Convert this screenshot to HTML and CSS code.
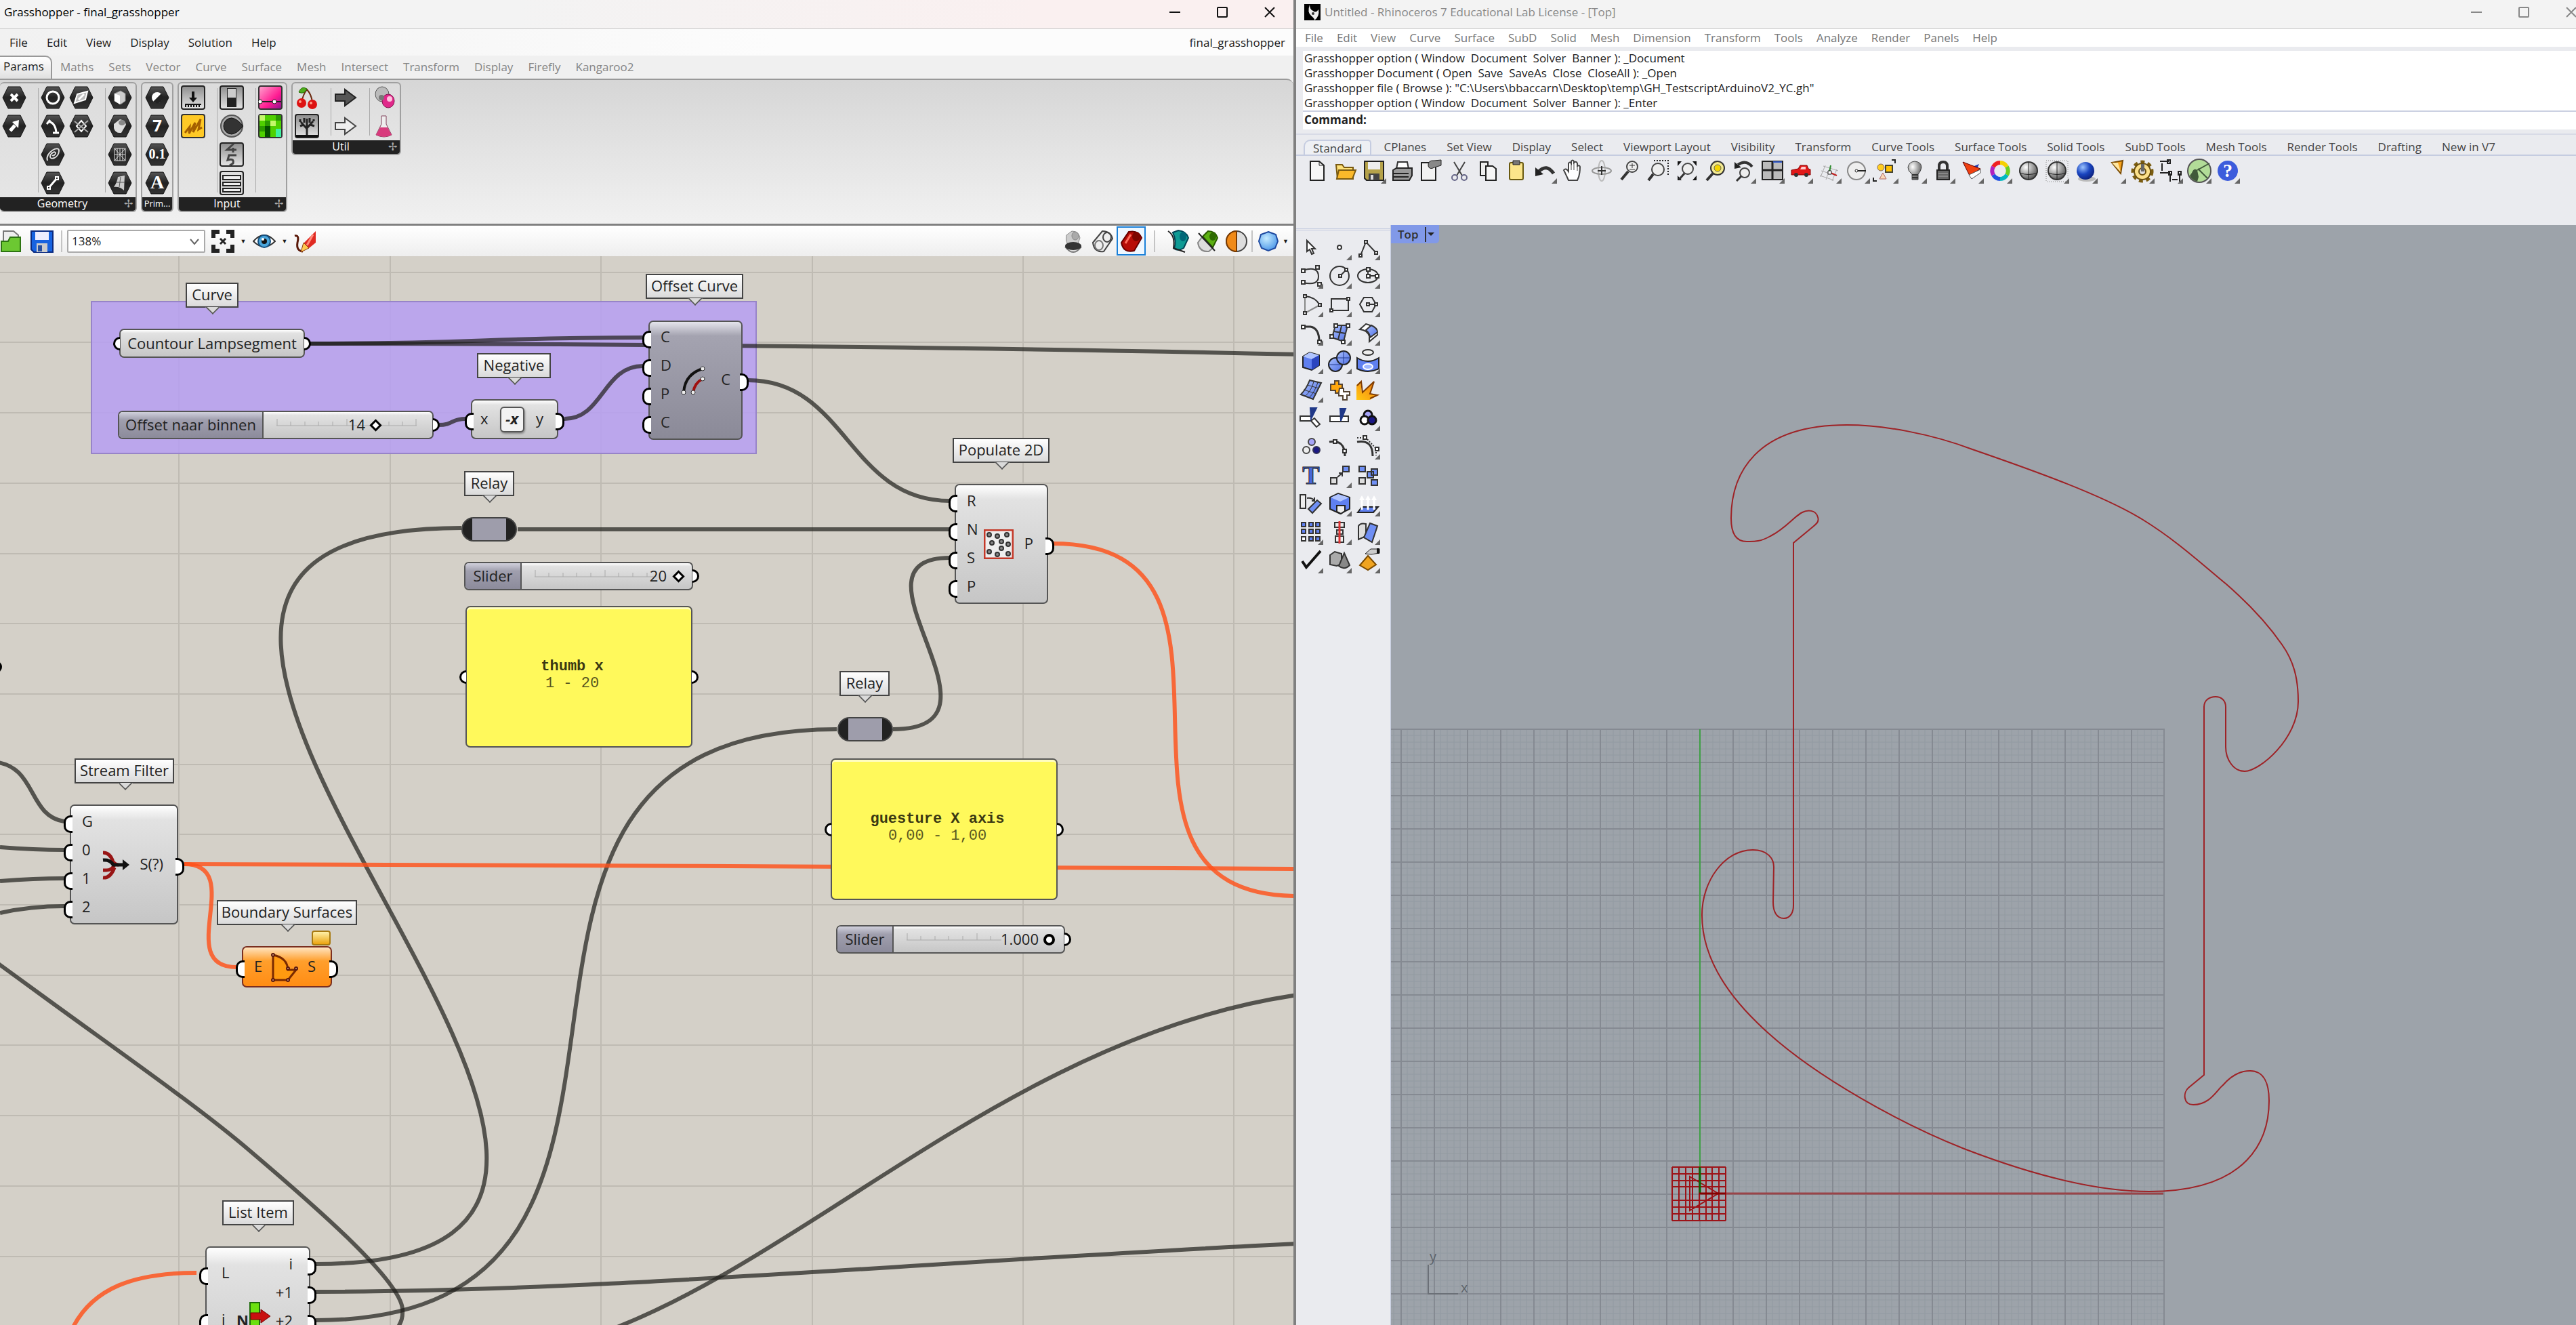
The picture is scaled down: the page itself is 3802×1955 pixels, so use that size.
FILE: index.html
```html
<!DOCTYPE html>
<html lang="en">
<head>
<meta charset="utf-8">
<title>Grasshopper - final_grasshopper</title>
<link rel="stylesheet" href="styles.css">
</head>
<body>
<svg class="defs" aria-hidden="true">
  <defs>
    <linearGradient id="g-dark" x1="0" y1="0" x2="0" y2="1"><stop offset="0" stop-color="#555"/><stop offset=".5" stop-color="#222"/><stop offset="1" stop-color="#333"/></linearGradient>
    <linearGradient id="g-grey" x1="0" y1="0" x2="0" y2="1"><stop offset="0" stop-color="#8d8d8d"/><stop offset="1" stop-color="#e6e6e6"/></linearGradient>
    <linearGradient id="g-pink" x1="0" y1="0" x2="1" y2="1"><stop offset="0" stop-color="#ffa6cf"/><stop offset=".6" stop-color="#ff1c92"/><stop offset="1" stop-color="#8a1090"/></linearGradient>
    <linearGradient id="g-blue" x1="0" y1="0" x2="1" y2="1"><stop offset="0" stop-color="#a9c0ff"/><stop offset="1" stop-color="#4f6fe4"/></linearGradient>
    <linearGradient id="g-orange" x1="0" y1="1" x2="1" y2="0"><stop offset="0" stop-color="#ffc814"/><stop offset="1" stop-color="#f47a10"/></linearGradient>
    <radialGradient id="g-ball" cx=".35" cy=".3" r=".8"><stop offset="0" stop-color="#fff"/><stop offset="1" stop-color="#444"/></radialGradient>
    <radialGradient id="g-bball" cx=".35" cy=".3" r=".8"><stop offset="0" stop-color="#9cc4ff"/><stop offset=".5" stop-color="#1a45c0"/><stop offset="1" stop-color="#0a1a70"/></radialGradient>
    <radialGradient id="g-gem" cx=".4" cy=".35" r=".7"><stop offset="0" stop-color="#c5ebff"/><stop offset="1" stop-color="#4794e8"/></radialGradient>
    <symbol id="hex" viewBox="0 0 36 34"><path d="M9 1H27L35 17 27 33H9L1 17Z" fill="url(#g-dark)" stroke="#111"/></symbol>
    <symbol id="tri" viewBox="0 0 42 42"><path d="M39 32V40H31Z" fill="#666"/></symbol>
    <pattern id="cplane" x="2508" y="1761" width="49" height="49" patternUnits="userSpaceOnUse">
      <path d="M10 0V49M20 0V49M30 0V49M39 0V49M0 10H49M0 20H49M0 30H49M0 39H49" stroke="#929aa1"/>
      <path d="M1 0V49M0 1H49" stroke="#858a92" stroke-width="2"/>
    </pattern>
  </defs>
</svg>

<section class="window gh">
  <header class="titlebar">
    <h1>Grasshopper - final_grasshopper</h1>
    <div class="controls">
      <button aria-label="Minimize"><svg width="20" height="20"><path d="M2 10H18"/></svg></button>
      <button aria-label="Maximize"><svg width="20" height="20"><rect x="3" y="3" width="14" height="14" rx="1"/></svg></button>
      <button aria-label="Close"><svg width="20" height="20"><path d="M3 3L17 17M17 3L3 17"/></svg></button>
    </div>
  </header>
  <nav class="menu">
    <button>File</button><button>Edit</button><button>View</button><button>Display</button><button>Solution</button><button>Help</button>
    <span class="docname">final_grasshopper</span>
  </nav>
  <nav class="tabs">
    <button class="active">Params</button><button>Maths</button><button>Sets</button><button>Vector</button><button>Curve</button><button>Surface</button><button>Mesh</button><button>Intersect</button><button>Transform</button><button>Display</button><button>Firefly</button><button>Kangaroo2</button>
  </nav>
  <div class="ribbon">
    <section class="rgroup geometry">
      <div class="cells">
        <div class="col">
          <button aria-label="Point"><svg><use href="#hex"/><path d="M13 12L23 22M23 12L13 22" stroke="#fff" stroke-width="4"/></svg></button>
          <button aria-label="Vector"><svg><use href="#hex"/><path d="M12 24L19 16" stroke="#fff" stroke-width="5"/><path d="M15 11L25 8 24 20Z" fill="#fff"/></svg></button>
        </div>
        <div class="col">
          <button aria-label="Circle"><svg><use href="#hex"/><circle cx="18" cy="17" r="9" fill="none" stroke="#fff" stroke-width="3"/></svg></button>
          <button aria-label="Arc"><svg><use href="#hex"/><path d="M11 10Q22 12 23 27M9 14L14 8M18 27H27" fill="none" stroke="#fff" stroke-width="3"/></svg></button>
          <button aria-label="Curve"><svg><use href="#hex"/><path d="M10 26C6 14 28 2 27 12 26 22 14 26 14 20 14 15 22 11 22 15 22 18 18 19 17 18" fill="none" stroke="#ddd" stroke-width="2"/></svg></button>
          <button aria-label="Line"><svg><use href="#hex"/><path d="M12 24L24 10" stroke="#fff" stroke-width="3"/><path d="M10 22h4v4h-4ZM22 8h4v4h-4Z" fill="#222" stroke="#fff" stroke-width="2"/></svg></button>
        </div>
        <div class="col next">
          <button aria-label="Plane"><svg><use href="#hex"/><path d="M12 12L27 8 24 20 8 25Z" fill="#bbb" stroke="#fff" stroke-width="2"/><path d="M14 20L22 12" stroke="#fff" stroke-width="3"/></svg></button>
          <button aria-label="Rectangle"><svg><use href="#hex"/><path d="M11 17L18 9 25 17 18 25Z" fill="none" stroke="#fff" stroke-width="2"/><path d="M8 10L28 26M28 9L8 26" stroke="#aaa" stroke-width="2"/></svg></button>
        </div>
        <div class="col">
          <button aria-label="Box"><svg><use href="#hex"/><path d="M10 11L19 7 26 11V22L19 27 10 22Z" fill="#ccc" stroke="#888"/><path d="M10 11L18 14V27L10 22Z" fill="#fff"/></svg></button>
          <button aria-label="Brep"><svg><use href="#hex"/><path d="M9 14L18 7Q26 8 27 15L20 27Q11 28 9 20Z" fill="#ddd"/><ellipse cx="21" cy="12" rx="5" ry="4" fill="#888"/></svg></button>
          <button aria-label="Mesh"><svg><use href="#hex"/><path d="M10 8H26V26H10ZM18 8V26M10 17H26M10 8L26 26M26 8L10 26M14 8V26M22 8V26" fill="none" stroke="#ddd"/></svg></button>
          <button aria-label="Surface"><svg><use href="#hex"/><path d="M15 8L25 6 24 28Q18 22 9 23 14 16 15 8Z" fill="#ccc"/><path d="M19 8L17 23M12 16H25" stroke="#555"/></svg></button>
        </div>
      </div>
      <footer>Geometry<i>✢</i></footer>
    </section>
    <section class="rgroup primitive">
      <div class="cells">
        <div class="col">
          <button aria-label="Boolean"><svg><use href="#hex"/><circle cx="18" cy="17" r="8" fill="#fff"/><path d="M24 11A8 8 0 0 1 12 23Z" fill="#222"/></svg></button>
          <button aria-label="Integer"><svg><use href="#hex"/></svg><b>7</b></button>
          <button aria-label="Number"><svg><use href="#hex"/></svg><b class="serif small">0.1</b></button>
          <button aria-label="Text"><svg><use href="#hex"/></svg><b class="serif">A</b></button>
        </div>
      </div>
      <footer>Prim...</footer>
    </section>
    <section class="rgroup input">
      <div class="cells">
        <div class="col">
          <button aria-label="Number Slider"><svg><rect x="1" y="1" width="34" height="34" rx="3" fill="url(#g-grey)" stroke="#222" stroke-width="2"/><path d="M18 9V20" stroke="#111" stroke-width="4"/><path d="M12 18H24L18 25Z" fill="#111"/><path d="M6 28H30M7 28V32M11 28V32M15 28V32M19 28V32M23 28V32M27 28V32" stroke="#111" stroke-width="2"/></svg></button>
          <button aria-label="Graph Mapper"><svg><rect x="1" y="1" width="34" height="34" rx="3" fill="#ffc926" stroke="#333" stroke-width="2"/><path d="M6 28L13 19 12 29 21 13 18 27 29 8 26 23 31 20" fill="none" stroke="#a55f00" stroke-width="3"/></svg></button>
        </div>
        <div class="col">
          <button aria-label="Boolean Toggle"><svg><rect x="1" y="1" width="34" height="34" rx="3" fill="url(#g-grey)" stroke="#222" stroke-width="2"/><rect x="11" y="4" width="14" height="28" fill="#222"/><rect x="12" y="5" width="12" height="13" fill="#ccc"/></svg></button>
          <button aria-label="Control Knob"><svg><circle cx="18" cy="18" r="16" fill="#aaa" stroke="#555" stroke-width="2"/><path d="M18 6A12 12 0 1 0 18 30Q26 29 35 18 26 7 18 6Z" fill="#333" stroke="#111"/></svg></button>
          <button aria-label="Digit Scroller"><svg><rect x="1" y="1" width="34" height="34" rx="3" fill="url(#g-grey)" stroke="#222" stroke-width="2"/><path d="M21 2L11 11H25M20 8V15M25 19H14L12 26Q22 23 20 31L15 34" fill="none" stroke="#444" stroke-width="3"/></svg></button>
          <button aria-label="Value List"><svg><rect x="1" y="1" width="34" height="34" rx="3" fill="#ddd" stroke="#222" stroke-width="2"/><path d="M5 7H31V13H5ZM5 17H31V22H5ZM5 26H31V31H5Z" fill="#eee" stroke="#222" stroke-width="2"/></svg></button>
        </div>
        <div class="col">
          <button aria-label="Gradient"><svg><rect x="1" y="1" width="34" height="34" rx="3" fill="url(#g-pink)" stroke="#333" stroke-width="2"/><path d="M2 24H34" stroke="#222" stroke-width="2"/><circle cx="3" cy="24" r="3" fill="#fff" stroke="#222"/><circle cx="24" cy="24" r="3" fill="#fff" stroke="#222"/></svg></button>
          <button aria-label="Image Sampler"><svg><rect x="1" y="1" width="34" height="34" rx="3" fill="#4fd000" stroke="#333" stroke-width="2"/><path d="M2 2H10V10H2ZM18 10H26V18H18Z" fill="#c4f86a"/><path d="M10 10H18V18H10ZM26 2H34V10H26ZM2 18H10V26H2Z" fill="#2a9a00"/><path d="M10 18H18V34H10Z" fill="#045000"/><path d="M26 22H34V34H26Z" fill="#3ff0a0"/></svg></button>
        </div>
      </div>
      <footer>Input<i>✢</i></footer>
    </section>
    <section class="rgroup util">
      <div class="cells">
        <div class="col">
          <button aria-label="Cherry Picker"><svg><path d="M10 25Q12 14 18 6 25 14 26 25" fill="none" stroke="#6b2a10" stroke-width="2"/><path d="M18 5Q10 0 6 10 14 14 18 5Z" fill="#4fae1c" stroke="#28700a"/><circle cx="10" cy="26" r="7" fill="#dd1212"/><circle cx="26" cy="28" r="7" fill="#dd1212"/><circle cx="8" cy="24" r="2" fill="#ff9d8a"/><circle cx="24" cy="26" r="2" fill="#ff9d8a"/></svg></button>
          <button aria-label="Galapagos"><svg><rect x="1" y="1" width="34" height="34" rx="3" fill="url(#g-grey)" stroke="#222" stroke-width="2"/><path d="M18 31V18M18 22L9 12M18 21L27 11M18 18V7M13 16L8 18M23 16L29 18M14 13V6M22 13V6M8 12V8M28 11V8" stroke="#222" stroke-width="3"/><path d="M2 31H34V34H2Z" fill="#111"/></svg></button>
        </div>
        <div class="col">
          <button aria-label="Relay"><svg><path d="M3 13H17V6L33 18 17 30V23H3Z" fill="#555" stroke="#222" stroke-width="2"/></svg></button>
          <button aria-label="Data Dam"><svg><path d="M3 13H17V6L33 18 17 30V23H3Z" fill="#eee" stroke="#444" stroke-width="2"/></svg></button>
        </div>
        <div class="col">
          <button aria-label="Cluster"><svg><ellipse cx="15" cy="13" rx="10" ry="11" fill="#bbb" stroke="#555"/><ellipse cx="24" cy="23" rx="9" ry="10" fill="#e0288a" stroke="#80104a"/><circle cx="14" cy="18" r="4" fill="#777"/><circle cx="26" cy="20" r="4" fill="#ffc0de"/></svg></button>
          <button aria-label="Fitness"><svg><path d="M14 3H21V15L29 31Q18 37 6 31L14 15Z" fill="#eee" stroke="#80405a"/><path d="M12 20H23L29 31Q18 37 6 31Z" fill="#d83a7c"/></svg></button>
        </div>
      </div>
      <footer>Util<i>✢</i></footer>
    </section>
  </div>
  <div class="toolbar">
    <button class="open" aria-label="Open"><svg width="32" height="36"><path d="M5 3H20L27 9V28H5Z" fill="#eee" stroke="#777" stroke-width="2"/><path d="M2 18H12L15 12H30V33H2Z" fill="#6cc832" stroke="#2d7412" stroke-width="2"/></svg></button>
    <button aria-label="Save"><svg width="34" height="36"><path d="M1 3H33V34H5L1 30Z" fill="#1763e0" stroke="#0a2a80" stroke-width="2"/><path d="M7 4H27V16H7Z" fill="#eef"/><path d="M9 21H25V34H9Z" fill="#ccc"/><path d="M11 24H17V33H11Z" fill="#2850a0"/></svg></button>
    <span class="sep"></span>
    <label class="zoom"><select aria-label="Zoom"><option>138%</option></select><svg width="14" height="10"><path d="M1 1L7 8 13 1"/></svg></label>
    <button aria-label="Zoom extents"><svg width="36" height="36"><path d="M4 13V4H13M23 4H32V13M32 23V32H23M13 32H4V23" fill="none" stroke="#222" stroke-width="6"/><path d="M14 14L22 22M22 14L14 22" stroke="#222" stroke-width="3"/></svg></button>
    <span class="drop">▼</span>
    <button aria-label="Preview"><svg width="34" height="36"><path d="M1 18Q17 0 33 18 17 34 1 18Z" fill="#fff" stroke="#333" stroke-width="2"/><circle cx="17" cy="18" r="9" fill="#4aa6dc" stroke="#145080" stroke-width="2"/><circle cx="17" cy="18" r="4" fill="#111"/><circle cx="15" cy="15" r="2" fill="#fff"/></svg></button>
    <span class="drop">▼</span>
    <button class="sketch" aria-label="Sketch"><svg width="36" height="36"><path d="M2 10Q9 8 6 20 4 32 14 33" fill="none" stroke="#5a1808" stroke-width="3"/><path d="M33 3V20L22 29 15 21Z" fill="#e02a22"/><path d="M15 20L23 28 11 34Z" fill="#ffca50" stroke="#8a3a10"/><path d="M29 8L20 24" stroke="#ff8a7a" stroke-width="3"/></svg></button>
    <div class="right">
      <button aria-label="No preview"><svg width="36" height="36"><path d="M8 9L16 3Q26 3 28 13L24 24H12Q6 20 8 9Z" fill="#ccc" stroke="#888"/><ellipse cx="21" cy="10" rx="5" ry="6" fill="#aaa" stroke="#888"/><path d="M6 26Q18 42 30 26" fill="#ddd" stroke="#777" stroke-width="2"/><ellipse cx="18" cy="25" rx="12" ry="6" fill="#333"/></svg></button>
      <button aria-label="Wireframe preview"><svg width="36" height="36"><path d="M4 20L18 3Q30 3 33 14L20 33Q6 35 4 20Z" fill="#eee" stroke="#444" stroke-width="2"/><ellipse cx="25" cy="12" rx="6" ry="7" fill="none" stroke="#444" stroke-width="2"/><ellipse cx="13" cy="24" rx="6" ry="7" fill="none" stroke="#777" stroke-width="2"/></svg></button>
      <button class="on" aria-label="Shaded preview"><svg width="36" height="36"><path d="M3 20L14 4Q28 1 33 13L22 32Q6 36 3 20Z" fill="#b80d08" stroke="#600" stroke-width="2"/><ellipse cx="25" cy="11" rx="6" ry="7" fill="#7d0500"/><path d="M9 21L17 8" stroke="#ff7060" stroke-width="3"/></svg></button>
      <span class="sep wide"></span>
      <button aria-label="Selected only"><svg width="36" height="36"><path d="M10 5L18 2Q30 3 33 13L26 28Q18 33 12 29 16 18 10 5Z" fill="#0e9a94" stroke="#045" stroke-width="2"/><ellipse cx="25" cy="11" rx="5" ry="7" fill="#067"/><path d="M3 3Q14 10 11 28L28 34" fill="none" stroke="#222" stroke-width="2"/></svg></button>
      <button aria-label="Document preview"><svg width="36" height="36"><path d="M4 20L10 12 26 28 20 33Q6 34 4 20Z" fill="#ddd" stroke="#888" stroke-width="2"/><path d="M11 11L19 3Q30 3 33 13L26 27Z" fill="#5db012" stroke="#2a5a00" stroke-width="2"/><ellipse cx="26" cy="11" rx="5" ry="6" fill="#2d6a00"/><path d="M5 6L29 32" stroke="#222" stroke-width="2"/></svg></button>
      <button aria-label="Preview quality"><svg width="36" height="36"><circle cx="18" cy="18" r="15" fill="#ddd" stroke="#444" stroke-width="2"/><path d="M18 3A15 15 0 0 0 18 33Z" fill="#f08a18" stroke="#7a3a00" stroke-width="2"/></svg></button>
      <span class="sep tight"></span>
      <button aria-label="Preview settings"><svg width="34" height="36"><path d="M17 4L28 8 31 18 27 28 17 32 7 28 3 18 6 8Z" fill="url(#g-gem)" stroke="#1f4aa0" stroke-width="2"/></svg></button>
      <span class="drop">▼</span>
    </div>
  </div>

  <main class="canvas">
    <svg class="wires" aria-hidden="true">
      <g transform="translate(0 -379)">
        <path class="grid" d="M264 379V2400M576 379V2400M887 379V2400M1199 379V2400M1510 379V2400M1821 379V2400M0 403H4000M0 506H4000M0 610H4000M0 714H4000M0 818H4000M0 921H4000M0 1025H4000M0 1129H4000M0 1232H4000M0 1336H4000M0 1440H4000M0 1543H4000M0 1647H4000M0 1751H4000M0 1855H4000"/>
        <rect x="135" y="446" width="981" height="224" fill="#b79ff0" fill-opacity=".88" stroke="#9784c8" stroke-width="2"/>
        <g class="wire">
          <path d="M458 508C700 508 720 499 949 499"/>
          <path d="M458 508C800 508 1400 512 1915 524"/>
          <path d="M647 628C670 628 665 619 687 619"/>
          <path d="M833 619C890 619 890 541 949 541"/>
          <path d="M1104 562C1250 562 1252 740 1402 740"/>
          <path d="M764 782H1402"/>
          <path d="M466 1866C1255 1866-134 780 681 780"/>
          <path d="M1318 1077C1508 1077 1234 824 1402 824"/>
          <path d="M466 1949C1109 1949 580 1077 1235 1077"/>
          <path d="M-10 1125C55 1130 40 1205 95 1213"/>
          <path d="M0 1251Q50 1255 95 1255"/>
          <path d="M0 1301Q50 1297 95 1297"/>
          <path d="M0 1348Q45 1338 95 1338"/>
          <path d="M-5 1421L76 1480C200 1570 300 1640 370 1700 470 1785 590 1890 594 1932 595 1945 592 1952 587 1960"/>
          <path d="M466 1907C900 1907 1400 1860 1915 1836"/>
          <path d="M882 1970C1192 1860 1495 1530 1915 1469"/>
        </g>
        <g class="wire hot">
          <path d="M272 1276C800 1276 1400 1282 1915 1283"/>
          <path d="M272 1276C365 1276 255 1428 349 1428"/>
          <path d="M1554 803C1903 803 1565 1323 1915 1323"/>
          <path d="M105 1965C135 1900 200 1879 290 1879"/>
        </g>
        <circle cx="-6" cy="985" r="9"/>
      </g>
    </svg>

    <span class="tag t-curve">Curve</span>
    <div class="node param n-curve"><span class="in"></span>Countour Lampsegment<span class="out"></span></div>

    <span class="tag t-offset">Offset Curve</span>
    <div class="node grey n-offset">
      <ul class="ins"><li>C</li><li>D</li><li>P</li><li>C</li></ul>
      <svg width="40" height="44"><path d="M6 40Q8 13 34 5" fill="none" stroke="#111" stroke-width="4"/><path d="M20 40Q22 26 34 20" fill="none" stroke="#a01010" stroke-width="4"/><g fill="#eee" stroke="#333"><circle cx="34" cy="5" r="3"/><circle cx="34" cy="20" r="3"/><circle cx="6" cy="40" r="3"/><circle cx="20" cy="40" r="3"/></g></svg>
      <ul class="outs"><li>C</li></ul>
    </div>

    <div class="node slider n-sl1">
      <label for="sl1">Offset naar binnen</label>
      <div class="track"><svg width="207" height="11"><path d="M0 10H207M1 0V10M21 4V10M42 4V10M62 4V10M83 4V10M104 0V10M124 4V10M145 4V10M166 4V10M186 4V10M206 0V10"/></svg><input id="sl1" type="range" min="0" max="20" value="14"><output>14</output></div>
      <span class="out"></span>
    </div>

    <span class="tag t-neg">Negative</span>
    <div class="node n-neg">
      <ul class="ins"><li>x</li></ul><b class="negx">-x</b><ul class="outs"><li>y</li></ul>
    </div>

    <span class="tag t-relay1">Relay</span>
    <div class="relay n-relay1"></div>

    <div class="node slider n-sl2">
      <label for="sl2">Slider</label>
      <div class="track"><svg width="207" height="11"><path d="M0 10H180M1 0V10M21 4V10M42 4V10M62 4V10M83 4V10M104 0V10M124 4V10M145 4V10M166 4V10"/></svg><input id="sl2" type="range" min="0" max="20" value="20"><output>20</output></div>
      <span class="out"></span>
    </div>

    <div class="node panel n-panel1"><span class="in"></span><p><b>thumb x</b><br>1 - 20</p><span class="out"></span></div>

    <span class="tag t-pop">Populate 2D</span>
    <div class="node n-pop">
      <ul class="ins"><li>R</li><li>N</li><li>S</li><li>P</li></ul>
      <svg width="44" height="44"><rect x="1" y="1" width="42" height="42" fill="#eee" stroke="#c43828" stroke-width="3"/><g fill="#888" stroke="#333" stroke-width="2"><circle cx="8" cy="8" r="3"/><circle cx="20" cy="10" r="3"/><circle cx="34" cy="8" r="3"/><circle cx="12" cy="20" r="3"/><circle cx="26" cy="18" r="3"/><circle cx="36" cy="22" r="3"/><circle cx="26" cy="28" r="3"/><circle cx="8" cy="33" r="3"/><circle cx="20" cy="37" r="3"/><circle cx="36" cy="36" r="3"/></g></svg>
      <ul class="outs"><li>P</li></ul>
    </div>

    <span class="tag t-relay2">Relay</span>
    <div class="relay n-relay2"></div>

    <div class="node panel n-panel2"><span class="in"></span><p><b>guesture X axis</b><br>0,00 - 1,00</p><span class="out"></span></div>

    <div class="node slider round n-sl3">
      <label for="sl3">Slider</label>
      <div class="track"><svg width="207" height="11"><path d="M0 10H140M1 0V10M21 4V10M42 4V10M62 4V10M83 4V10M104 0V10M124 4V10"/></svg><input id="sl3" type="range" min="0" max="1" step="0.001" value="1"><output>1.000</output></div>
      <span class="out"></span>
    </div>

    <span class="tag t-stream">Stream Filter</span>
    <div class="node n-stream">
      <ul class="ins"><li>G</li><li>0</li><li>1</li><li>2</li></ul>
      <svg width="44" height="44"><path d="M3 4Q14 4 18 18 22 22 26 22M3 30H8Q16 30 20 22M3 41Q14 42 20 26" fill="none" stroke="#981515" stroke-width="5"/><path d="M3 15Q14 14 18 22H34" fill="none" stroke="#111" stroke-width="5"/><path d="M32 14L42 22 32 30Z" fill="#111"/></svg>
      <ul class="outs"><li>S(?)</li></ul>
    </div>

    <span class="tag t-boundary">Boundary Surfaces</span>
    <div class="node orange n-boundary">
      <ul class="ins"><li>E</li></ul>
      <svg width="42" height="44"><path d="M4 4Q25 8 26 26H38L26 41H4Z" fill="#ff9a10" stroke="#7a2a00" stroke-width="3"/><g fill="#d9a080" stroke="#5a1a10" stroke-width="2"><circle cx="4" cy="4" r="2"/><circle cx="26" cy="24" r="2"/><circle cx="38" cy="24" r="2"/><circle cx="26" cy="41" r="2"/><circle cx="4" cy="41" r="2"/></g></svg>
      <ul class="outs"><li>S</li></ul>
      <span class="balloon"></span>
    </div>

    <span class="tag t-list">List Item</span>
    <div class="node n-list">
      <ul class="ins"><li>L</li><li>i</li></ul>
      <div class="listicon"><b>N</b><svg width="34" height="54"><path d="M2 2H16V54H2Z" fill="#6be010" stroke="#1d6a0a" stroke-width="2"/><path d="M3 17H18V12L32 22 18 32V27H3Z" fill="#c81010" stroke="#700"/></svg></div>
      <ul class="outs"><li>i</li><li>+1</li><li>+2</li></ul>
    </div>
  </main>
</section>

<section class="window rh">
  <header class="titlebar">
    <svg class="logo" width="24" height="24"><rect width="24" height="24" fill="#000"/><path d="M8 1Q4 12 10 17 16 22 15 24 23 18 21 8 17 14 13 10 8 8 8 1Z" fill="#eee"/><circle cx="13" cy="14" r="2" fill="#333"/></svg>
    <h1>Untitled - Rhinoceros 7 Educational Lab License - [Top]</h1>
    <div class="controls">
      <button aria-label="Minimize"><svg width="20" height="20"><path d="M2 10H18"/></svg></button>
      <button aria-label="Maximize"><svg width="20" height="20"><rect x="3" y="3" width="14" height="14" rx="1"/></svg></button>
      <button aria-label="Close"><svg width="20" height="20"><path d="M3 3L17 17M17 3L3 17"/></svg></button>
    </div>
  </header>
  <nav class="menu">
    <button>File</button><button>Edit</button><button>View</button><button>Curve</button><button>Surface</button><button>SubD</button><button>Solid</button><button>Mesh</button><button>Dimension</button><button>Transform</button><button>Tools</button><button>Analyze</button><button>Render</button><button>Panels</button><button>Help</button>
  </nav>
  <div class="command">
    <pre>Grasshopper option ( Window  Document  Solver  Banner ): _Document
Grasshopper Document ( Open  Save  SaveAs  Close  CloseAll ): _Open
Grasshopper file ( Browse ): "C:\Users\bbaccarn\Desktop\temp\GH_TestscriptArduinoV2_YC.gh"
Grasshopper option ( Window  Document  Solver  Banner ): _Enter</pre>
    <div class="prompt"><label for="cmd">Command:</label><input id="cmd" type="text"></div>
  </div>
  <nav class="tabs">
    <button class="active">Standard</button><button>CPlanes</button><button>Set View</button><button>Display</button><button>Select</button><button>Viewport Layout</button><button>Visibility</button><button>Transform</button><button>Curve Tools</button><button>Surface Tools</button><button>Solid Tools</button><button>SubD Tools</button><button>Mesh Tools</button><button>Render Tools</button><button>Drafting</button><button>New in V7</button>
  </nav>
  <div class="toolbar">
    <button aria-label="New"><svg><path d="M11 7H24L31 13V35H11Z" fill="#f6f6f6" stroke="#222" stroke-width="2"/><path d="M24 7V13H31" fill="none" stroke="#222"/></svg></button>
    <button aria-label="Open"><svg><path d="M7 12H16L19 16H32V33H9Z" fill="#ffe27a" stroke="#7a5a10" stroke-width="2"/><path d="M11 20H36L31 33H8Z" fill="#fbb92a" stroke="#7a5a10" stroke-width="2"/></svg></button>
    <button aria-label="Save"><svg><path d="M7 7H35V35H10L7 32Z" fill="#b5a24a" stroke="#222" stroke-width="2"/><path d="M12 8H30V19H12Z" fill="#eee"/><path d="M13 25H29V35H13Z" fill="#444"/><path d="M16 27H20V34H16Z" fill="#ddd"/><use href="#tri"/></svg></button>
    <button aria-label="Print"><svg><path d="M14 8H28L30 18H12Z" fill="#fff" stroke="#333" stroke-width="2"/><path d="M7 20L12 17H35V28L31 35H7Z" fill="#999" stroke="#222" stroke-width="2"/><path d="M8 25H30M8 30H30" stroke="#222" stroke-width="2"/></svg></button>
    <button aria-label="Document Properties"><svg><path d="M7 9H28V35H7Z" fill="#f2f2f2" stroke="#222" stroke-width="2"/><path d="M17 14Q16 5 26 6L36 5V13L26 16Q19 20 17 14Z" fill="#888" stroke="#222"/></svg></button>
    <button aria-label="Cut"><svg><path d="M13 8L25 28M29 8L17 28" stroke="#444" stroke-width="2"/><circle cx="14" cy="31" r="4" fill="none" stroke="#668" stroke-width="2"/><circle cx="28" cy="31" r="4" fill="none" stroke="#668" stroke-width="2"/></svg></button>
    <button aria-label="Copy"><svg><path d="M10 8H21V28H10Z" fill="#eee" stroke="#222" stroke-width="2"/><path d="M18 14H28L33 18V35H18Z" fill="#f6f6f6" stroke="#222" stroke-width="2"/></svg></button>
    <button aria-label="Paste"><svg><rect x="11" y="9" width="20" height="25" rx="2" fill="#fbe58a" stroke="#6a5a10" stroke-width="2"/><path d="M16 6H26V12H16Z" fill="#777" stroke="#222"/></svg></button>
    <button aria-label="Undo"><svg><path d="M12 22Q24 10 34 25" fill="none" stroke="#333" stroke-width="5"/><path d="M7 16V29L19 26Z" fill="#222"/><use href="#tri"/></svg></button>
    <button aria-label="Pan"><svg><path d="M14 35Q10 26 7 20 10 16 14 22V10Q16 7 18 10V7Q20 4 22 7V9Q25 6 27 10V14Q30 12 31 15 31 28 27 35Z" fill="#fff" stroke="#444" stroke-width="2"/><path d="M18 10V20M22 9V20M27 13V21" stroke="#444"/></svg></button>
    <button aria-label="Rotate View"><svg><ellipse cx="21" cy="21" rx="5" ry="15" fill="none" stroke="#bbb" stroke-width="2"/><ellipse cx="21" cy="21" rx="14" ry="5" fill="none" stroke="#999" stroke-width="2"/><path d="M21 14V27M15 21H27" stroke="#333" stroke-width="2"/></svg></button>
    <button aria-label="Zoom Dynamic"><svg><circle cx="24" cy="15" r="8" fill="#eee" stroke="#444" stroke-width="2"/><path d="M18 22L8 34" stroke="#333" stroke-width="4"/><path d="M20 13H28M24 10V17M20 19H28" stroke="#333"/></svg></button>
    <button aria-label="Zoom Window"><svg><path d="M14 6H35V27" fill="none" stroke="#222" stroke-width="2" stroke-dasharray="2 2"/><circle cx="20" cy="19" r="9" fill="#eee" stroke="#444" stroke-width="2"/><path d="M13 26L6 35" stroke="#333" stroke-width="4"/></svg></button>
    <button aria-label="Zoom Extents"><svg><path d="M7 14V7H13ZM29 7H35V14ZM35 28V35H29ZM13 35H7V28Z" fill="#111"/><circle cx="22" cy="18" r="8" fill="#eee" stroke="#444" stroke-width="2"/><path d="M17 25L9 34" stroke="#333" stroke-width="3"/></svg></button>
    <button aria-label="Zoom Selected"><svg><circle cx="24" cy="17" r="10" fill="#f4ea90" stroke="#333" stroke-width="2"/><circle cx="24" cy="17" r="5" fill="#f4d400" stroke="#665"/><path d="M17 25L8 35" stroke="#333" stroke-width="4"/></svg></button>
    <button aria-label="Undo View"><svg><path d="M12 12Q24 4 33 15" fill="none" stroke="#333" stroke-width="4"/><path d="M7 8V18L17 16Z" fill="#222"/><circle cx="22" cy="24" r="7" fill="#eee" stroke="#444" stroke-width="2"/><path d="M17 29L10 36" stroke="#333" stroke-width="3"/><use href="#tri"/></svg></button>
    <button aria-label="Four Viewports"><svg><path d="M6 7H36V34H6Z" fill="#bbb" stroke="#222" stroke-width="2"/><path d="M21 7V34M6 20H36" stroke="#222" stroke-width="3"/><path d="M22 8H35" stroke="#335ac8" stroke-width="2"/><use href="#tri"/></svg></button>
    <button aria-label="Named View"><svg><path d="M7 20L17 18 20 13H30L32 18 35 19V27H7Z" fill="#e01818" stroke="#800"/><path d="M22 15H28V19H20Z" fill="#fcc"/><circle cx="14" cy="27" r="3" fill="#333"/><circle cx="29" cy="27" r="3" fill="#333"/><use href="#tri"/></svg></button>
    <button aria-label="Set CPlane"><svg><path d="M12 14L34 21M9 21L31 28M7 28L28 35M15 13L8 30M23 14L16 34M32 19L25 36" stroke="#aaa"/><path d="M21 23L23 13" stroke="#2a8a2a" stroke-width="2"/><path d="M21 23L32 28" stroke="#c02020" stroke-width="2"/><path d="M19 21h5v5h-5Z" fill="#fff" stroke="#222"/><use href="#tri"/></svg></button>
    <button aria-label="Object Snap"><svg><circle cx="19" cy="21" r="13" fill="#eee" stroke="#888" stroke-width="2"/><path d="M21 21H33" stroke="#222" stroke-width="2"/><circle cx="19" cy="21" r="2" fill="#fff" stroke="#222"/><use href="#tri"/></svg></button>
    <button aria-label="Select"><svg><circle cx="13" cy="16" r="5" fill="#ffce20" stroke="#865"/><path d="M20 13H30V23H20Z" fill="#ffc000" stroke="#443" stroke-width="2"/><path d="M16 24L21 33H11Z" fill="#fbd8b8" stroke="#a66"/><path d="M29 5H34V10M2 31V36H7" fill="none" stroke="#222" stroke-width="2"/><use href="#tri"/></svg></button>
    <button aria-label="Hide"><svg><path d="M21 7Q31 8 31 16 30 22 26 26V34H17V26Q11 22 11 16 12 8 21 7Z" fill="url(#g-ball)" stroke="#444"/><path d="M17 27H26M17 31H26" stroke="#333" stroke-width="2"/><use href="#tri"/></svg></button>
    <button aria-label="Lock"><svg><path d="M15 21V14Q15 8 21 8 27 8 27 14V21" fill="none" stroke="#333" stroke-width="4"/><path d="M12 20H30V34H12Z" fill="#666" stroke="#222" stroke-width="2"/><path d="M14 25H28M14 29H28" stroke="#aaa"/><use href="#tri"/></svg></button>
    <button aria-label="Layers"><svg><path d="M8 8L20 16 32 11 22 33Z" fill="#203ab0"/><path d="M8 8L18 28 34 18 21 13Z" fill="#f04010" stroke="#600"/><path d="M17 27L34 19V24L21 33Z" fill="#fff" stroke="#555"/><use href="#tri"/></svg></button>
    <button aria-label="Color"><svg fill="none" stroke-width="6"><path d="M21 9A12 12 0 0 1 31 15" stroke="#f6d000"/><path d="M31 15A12 12 0 0 1 31 27" stroke="#6ad020"/><path d="M31 27A12 12 0 0 1 21 33" stroke="#00b8c0"/><path d="M21 33A12 12 0 0 1 11 27" stroke="#2050e0"/><path d="M11 27A12 12 0 0 1 11 15" stroke="#b020c0"/><path d="M11 15A12 12 0 0 1 21 9" stroke="#f02020"/><use href="#tri"/></svg></button>
    <button aria-label="Shade"><svg><circle cx="21" cy="21" r="13" fill="url(#g-ball)" stroke="#333" stroke-width="2"/><path d="M8 24Q21 29 34 24M21 8V34" fill="none" stroke="#222"/></svg></button>
    <button aria-label="Render Preview"><svg><path d="M5 6H37V37H5Z" fill="none" stroke="#888" stroke-dasharray="1 2"/><circle cx="21" cy="21" r="13" fill="url(#g-ball)" stroke="#333" stroke-width="2"/><path d="M8 24Q21 29 34 24M21 8V34" fill="none" stroke="#222"/><use href="#tri"/></svg></button>
    <button aria-label="Render"><svg><ellipse cx="23" cy="33" rx="13" ry="4" fill="#bbb"/><circle cx="21" cy="21" r="13" fill="url(#g-bball)"/><use href="#tri"/></svg></button>
    <button aria-label="Spotlight"><svg><path d="M18 9L34 6 31 25Z" fill="#f7a21c" stroke="#7a4a00" stroke-width="2"/><path d="M18 9L27 9 31 23Z" fill="#ffe6a0"/><use href="#tri"/></svg></button>
    <button aria-label="Options"><svg><circle cx="21" cy="22" r="12" fill="none" stroke="#7a5c10" stroke-width="9" stroke-dasharray="5 4"/><circle cx="21" cy="22" r="12" fill="#fbe08a" stroke="#6a5010" stroke-width="2"/><circle cx="21" cy="22" r="5" fill="#ddd" stroke="#6a5010" stroke-width="2"/><path d="M19 11H24V22H19Z" fill="#666"/><use href="#tri"/></svg></button>
    <button aria-label="Dimension"><svg fill="none" stroke="#222" stroke-width="2"><path d="M5 7H18M5 24H20M8 10V21M20 25V37M34 25V37M23 34H31M16 5h4v5h-4ZM18 22h4v5h-4ZM32 22h4v5h-4Z"/><use href="#tri"/></svg></button>
    <button aria-label="Grasshopper"><svg><circle cx="21" cy="21" r="17" fill="#b2dc98" stroke="#555" stroke-width="2"/><path d="M10 24Q13 16 18 20L20 30 18 37Q9 34 7 28Z" fill="#40583a"/><path d="M18 20L36 10M19 18L33 32" fill="none" stroke="#40583a" stroke-width="2"/><use href="#tri"/></svg></button>
    <button class="help" aria-label="Help"><svg><circle cx="21" cy="21" r="15" fill="#3c5cdc"/><use href="#tri"/></svg><b>?</b></button>
  </div>
  <div class="work">
    <div class="palette">
      <button aria-label="Cancel"><svg><path d="M15 11V27L19 24 22 31 25 30 22 23H27Z" fill="#fff" stroke="#333" stroke-width="2"/></svg></button>
      <button aria-label="Point"><svg><circle cx="21" cy="21" r="3" fill="#fff" stroke="#333" stroke-width="2"/><use href="#tri"/></svg></button>
      <button aria-label="Polyline"><svg class="ln"><path d="M10 33L18 13 33 29"/><path class="pt" d="M8 31h4v4h-4ZM16 11h4v4h-4ZM31 27h4v4h-4Z"/><use href="#tri"/></svg></button>
      <button aria-label="Curve"><svg class="ln"><path d="M9 13Q32 6 32 22 32 36 9 31"/><path class="pt" d="M7 11h5v5h-5ZM7 28h5v5h-5ZM28 6h5v5h-5ZM31 31h5v5h-5Z"/><use href="#tri"/></svg></button>
      <button aria-label="Circle"><svg class="ln"><circle cx="21" cy="21" r="14"/><path d="M22 21L31 12"/><path class="pt" d="M20 19h4v4h-4ZM29 10h4v4h-4Z"/><use href="#tri"/></svg></button>
      <button aria-label="Ellipse"><svg class="ln"><ellipse cx="21" cy="21" rx="15" ry="10"/><path d="M21 11V21H35"/><path class="pt" d="M19 9h5v5h-5ZM19 19h5v5h-5ZM32 19h5v5h-5Z"/><use href="#tri"/></svg></button>
      <button aria-label="Arc"><svg class="ln"><path d="M12 9Q27 10 34 22"/><path d="M34 22L12 34V9" stroke="#888"/><path class="pt" d="M10 7h4v4h-4ZM32 20h4v4h-4ZM10 32h4v4h-4Z"/><use href="#tri"/></svg></button>
      <button aria-label="Rectangle"><svg class="ln"><path d="M9 13H34V30H9Z"/><path class="pt" d="M32 11h4v4h-4ZM7 28h4v4h-4Z"/><use href="#tri"/></svg></button>
      <button aria-label="Polygon"><svg class="ln"><path d="M9 21L15 11H27L33 21 27 32H15Z"/><path d="M21 21H33"/><path class="pt" d="M19 19h4v4h-4ZM31 19h4v4h-4Z"/><use href="#tri"/></svg></button>
      <button aria-label="Fillet"><svg class="ln"><path d="M9 12H20Q33 14 33 34" stroke-width="3"/><path class="pt" d="M7 10h5v5h-5ZM31 32h5v5h-5Z"/><use href="#tri"/></svg></button>
      <button aria-label="Surface"><svg class="ln"><path d="M15 10H33L27 34 10 28Z" fill="url(#g-blue)"/><path d="M24 11L19 31M13 19L30 22"/><path class="pt" d="M13 8h5v5h-5ZM31 8h5v5h-5ZM7 24h5v5h-5ZM24 32h5v5h-5Z"/><use href="#tri"/></svg></button>
      <button aria-label="Blend"><svg class="ln"><path d="M9 16L18 8Q34 12 35 24L23 34V26Q20 17 9 16Z" fill="#fff"/><path d="M18 17L26 10Q35 14 35 20L24 28Q24 22 18 17Z" fill="url(#g-blue)"/><use href="#tri"/></svg></button>
      <button aria-label="Box"><svg><path d="M9 14L19 8 33 12V27L22 34 9 30Z" fill="#5f7ff0" stroke="#222" stroke-width="2"/><path d="M9 14L19 8 33 12 22 18Z" fill="#b0c4ff"/><path d="M22 18L33 12V27L22 34Z" fill="#2c46c0"/><use href="#tri"/></svg></button>
      <button aria-label="Boolean"><svg><circle cx="15" cy="26" r="10" fill="url(#g-blue)" stroke="#222" stroke-width="2"/><circle cx="27" cy="16" r="10" fill="url(#g-blue)" stroke="#222" stroke-width="2"/><path d="M17 16H37M27 6V26M5 26H22" stroke="#233a90"/><use href="#tri"/></svg></button>
      <button aria-label="Project"><svg><ellipse cx="21" cy="8" rx="8" ry="4" fill="#eee" stroke="#333" stroke-width="2"/><path d="M5 16Q21 26 37 16V32Q21 40 5 32Z" fill="#5f80f0" stroke="#222" stroke-width="2"/><ellipse cx="21" cy="29" rx="7" ry="4" fill="#9db6ff" stroke="#fff" stroke-width="2"/><use href="#tri"/></svg></button>
      <button aria-label="Mesh"><svg class="ln"><path d="M19 7L36 11 24 35 6 28Q14 20 19 7Z" fill="url(#g-blue)"/><path d="M25 9Q22 22 12 31M31 10Q27 24 18 33M15 14L33 19M10 21L29 27" stroke-width="1"/><use href="#tri"/></svg></button>
      <button aria-label="Join"><svg><path d="M8 13H14V8H20V13H25V19H21V26H15V22H8Z" fill="#ffa70e" stroke="#543" stroke-width="2"/><path d="M21 19H27V24H36V29H32V36H26V30H20V25Z" fill="#fff" stroke="#543" stroke-width="2"/></svg></button>
      <button aria-label="Explode"><svg><path d="M4 36V14L10 9 12 25 30 9 24 27 35 29 24 36Z" fill="url(#g-orange)"/><path d="M5 15L11 9 13 25 30 9 24 27 35 29 24 34" fill="none" stroke="#803c00" stroke-width="2"/></svg></button>
      <button aria-label="Trim"><svg class="ln"><path d="M5 18H21V25H5ZM21 25L26 21 34 30 29 34Z" fill="#fff"/><path d="M20 6H29L21 22Z" fill="#203888" stroke="#203888"/></svg></button>
      <button aria-label="Split"><svg class="ln"><path d="M7 18H34V26H7Z" fill="#fff"/><path d="M22 7H30L23 25Z" fill="#203888" stroke="#203888"/></svg></button>
      <button aria-label="Group"><svg><circle cx="21" cy="16" r="6" fill="#a6a4f8" stroke="#111" stroke-width="3"/><circle cx="16" cy="24" r="6" fill="#fff" stroke="#111" stroke-width="3"/><circle cx="27" cy="24" r="6" fill="#1b1884" stroke="#111" stroke-width="3"/><use href="#tri"/></svg></button>
      <button aria-label="Ungroup"><svg><circle cx="22" cy="14" r="5" fill="#a6a4f8" stroke="#444" stroke-width="2"/><circle cx="14" cy="26" r="5" fill="#eee" stroke="#444" stroke-width="2"/><circle cx="29" cy="26" r="5" fill="#1b1884" stroke="#335" stroke-width="2"/></svg></button>
      <button aria-label="Points On"><svg class="ln"><path d="M6 14Q29 10 29 35" stroke-width="3"/><path class="pt" d="M12 11h5v5h-5ZM26 25h5v5h-5Z"/></svg></button>
      <button aria-label="Edit Points"><svg class="ln"><path d="M5 14Q28 10 28 35" stroke-width="3"/><path d="M5 8H18L33 24V34" stroke-dasharray="2 2"/><path class="pt" d="M14 5h5v5h-5ZM32 22h5v5h-5Z"/><use href="#tri"/></svg></button>
      <button class="text" aria-label="Text"><b>T</b></button>
      <button aria-label="Move"><svg class="ln"><path d="M8 25H17V34H8Z" fill="#ddd"/><path d="M26 8H35V16H26Z" fill="#6f8ff4"/><path d="M18 24L25 18M20 18H25V23"/><use href="#tri"/></svg></button>
      <button aria-label="Copy"><svg class="ln"><path d="M8 25H17V34H8Z" fill="#ddd"/><path d="M8 8H17V16H8ZM26 12H35V21H26ZM20 16H29V25H20ZM26 28H35V36H26Z" fill="#6f8ff4"/></svg></button>
      <button aria-label="Rotate"><svg class="ln"><path d="M5 8H13V28H5Z" fill="#eee"/><path d="M30 16L36 21 23 35 17 29Z" fill="#6f8ff4"/><path d="M15 13Q23 12 26 17M22 17H26V12"/></svg></button>
      <button aria-label="Scale"><svg><path d="M7 12L19 6 36 12V29L22 36 7 29Z" fill="#5f80f0" stroke="#222" stroke-width="2"/><path d="M8 12L19 7 35 12 22 18Z" fill="#b0c4ff"/><path d="M17 24H29V32L23 36 17 33Z" fill="#eee" stroke="#222" stroke-width="2"/><use href="#tri"/></svg></button>
      <button aria-label="Analyze"><svg><path d="M12 26H36L29 34H6Z" fill="#5f80f0" stroke="#222" stroke-width="2"/><path d="M12 30V12M21 30V12M30 30V12" stroke="#fff" stroke-width="3"/><path d="M8 16L12 9 16 16ZM17 16L21 9 25 16ZM26 16L30 9 34 16Z" fill="#fff"/><use href="#tri"/></svg></button>
      <button aria-label="Array"><svg class="ln"><path d="M7 7h6v6h-6ZM18 7h6v6h-6ZM28 7h6v6h-6ZM7 17h6v6h-6ZM18 17h6v6h-6ZM28 17h6v6h-6ZM18 28h6v6h-6ZM28 28h6v6h-6Z" fill="#5f80f0"/><path d="M7 28h6v6h-6Z" fill="#fff"/><use href="#tri"/></svg></button>
      <button aria-label="Align"><svg class="ln"><path d="M14 7H28V14H14ZM17 18H26V24H17ZM15 27H27V36H15Z" fill="#eee"/><path d="M21 5V38" stroke="#d33" stroke-width="3"/><use href="#tri"/></svg></button>
      <button aria-label="Flow"><svg class="ln"><path d="M7 12Q10 7 18 9V27L7 32Z" fill="#ddd"/><path d="M24 8L35 12 27 36 15 29Z" fill="#6f8ff4"/><use href="#tri"/></svg></button>
      <button aria-label="Check"><svg><path d="M8 22L14 31 35 7" fill="none" stroke="#111" stroke-width="4"/><use href="#tri"/></svg></button>
      <button aria-label="Solids"><svg><path d="M7 13L14 8 24 11V26L17 29 7 27Z" fill="#aaa" stroke="#333" stroke-width="2"/><path d="M28 10L36 28Q28 36 20 29Z" fill="#888" stroke="#333" stroke-width="2"/><use href="#tri"/></svg></button>
      <button aria-label="Gumball"><svg><path d="M21 14L33 27 21 35 9 28Z" fill="#f0a420" stroke="#7a4a00" stroke-width="2"/><path d="M17 11L25 4H38V10L26 12Z" fill="#ccc" stroke="#222"/><path d="M36 3V11" stroke="#111" stroke-width="4"/><use href="#tri"/></svg></button>
    </div>
    <div class="viewport">
      <svg class="model" aria-hidden="true">
        <g transform="translate(-2053 -332)">
          <rect x="2053" y="1075" width="1142" height="2000" fill="url(#cplane)"/>
          <path d="M3194 1075V3000" stroke="#858a92" stroke-width="2"/>
          <path d="M2509 1076V1723" stroke="#3f9f45" stroke-width="2"/>
          <path d="M2547 1761H3193" stroke="#9a4448" stroke-width="3"/>
          <path d="M2468 1722V1801M2478 1722V1801M2488 1722V1801M2498 1722V1801M2508 1722V1801M2518 1722V1801M2527 1722V1801M2537 1722V1801M2547 1722V1801M2468 1722H2547M2468 1732H2547M2468 1742H2547M2468 1751H2547M2468 1771H2547M2468 1781H2547M2468 1791H2547M2468 1801H2547M2494 1736L2536 1761 2494 1786Z" fill="none" stroke="#9d1217" stroke-width="2"/>
          <path d="M2509 1722V1761" stroke="#066a06" stroke-width="3"/>
          <path d="M2508 1761H2547" stroke="#800" stroke-width="3"/>
          <path d="M2647 801L2676 777C2682 772 2685 769 2683 763 2680 752 2668 752 2660 756 2648 762 2635 780 2613 791 2597 800 2588 799 2578 799 2560 799 2555 784 2555 765 2555 700 2590 627 2726 627 2780 627 2850 640 2911 663 2995 692 3103 730 3163 767 3210 796 3245 828 3286 862 3325 896 3350 925 3368 951 3385 975 3392 1000 3392 1035 3392 1090 3335 1138 3313 1138 3296 1138 3285 1120 3285 1102V1043C3285 1033 3278 1028 3270 1028 3261 1028 3253 1033 3253 1043V1586L3230 1605C3222 1612 3222 1630 3237 1630 3262 1630 3272 1608 3281 1601 3293 1587 3306 1580 3321 1580 3342 1580 3349 1600 3349 1624 3349 1680 3320 1758 3172 1758 3090 1758 2990 1730 2899 1695 2810 1660 2680 1590 2603 1518 2540 1460 2512 1405 2512 1350 2512 1300 2545 1254 2587 1254 2608 1254 2618 1266 2618 1279L2617 1331C2617 1345 2622 1355 2633 1355 2643 1355 2647 1345 2647 1336Z" fill="none" stroke="#9e2226" stroke-width="2"/>
          <path d="M2108 1866V1909H2152" fill="none" stroke="#6b7077" stroke-width="2"/>
          <text x="2110" y="1861">y</text><text x="2156" y="1907">x</text>
        </g>
      </svg>
      <button class="vtitle"><span>Top</span><i></i></button>
    </div>
  </div>
</section>
</body>
</html>
```
FILE: styles.css
```css
* { box-sizing: border-box; }
body {
  margin: 0;
  height: 100vh;
  display: grid;
  grid-template-columns: 1913fr 1889fr;
  overflow: hidden;
  font: 17px/22px "Open Sans", sans-serif;
  color: #1a1a1a;
}
button { margin: 0; padding: 0; border: 0; background: none; font: inherit; color: inherit; position: relative; }
h1 { margin: 0; font: inherit; }
ul { margin: 0; padding: 0; list-style: none; }
.defs { position: absolute; width: 0; height: 0; }
.window { display: flex; flex-direction: column; min-width: 0; min-height: 0; }
.titlebar { display: flex; align-items: center; height: 43px; flex: none; padding-bottom: 6px; border-bottom: 1px solid #c8c8c8; background: #f3f3f3; }
.controls { display: flex; margin-left: auto; }
.controls button { width: 70px; height: 36px; display: grid; place-items: center; }
.controls svg { fill: none; stroke: #111; stroke-width: 2; }
.menu { display: flex; align-items: center; flex: none; }

/* Grasshopper */
.gh { border-right: 4px solid #808080; background: #f0f0f0; }
.gh .titlebar { padding-left: 6px; background: linear-gradient(90deg, #f3f3f3 40%, #faf0f0 80%); color: #000; }
.gh .menu { height: 39px; padding: 0 12px 0 14px; gap: 28px; background: linear-gradient(90deg, #f1f1f1, #fcfcfc 60%); }
.docname { margin-left: auto; }
.gh .tabs { display: flex; flex: none; height: 34px; gap: 22px; color: #858585; align-items: center; }
.gh .tabs .active { align-self: stretch; width: 77px; margin-right: -10px; padding: 0 8px 4px 5px; border: 2px solid #999; border-width: 2px 2px 0 0; border-radius: 0 10px 0 0; background: linear-gradient(#fff, #e0e0e0); color: #1a1a1a; text-align: left; }
.ribbon { display: flex; align-items: flex-start; flex: none; gap: 6px; height: 217px; padding-top: 3px; border-top: 2px solid #999; border-bottom: 3px solid #808080; border-radius: 0 10px 0 0; background: linear-gradient(#d6d6d6, #f1f1f1); }
.rgroup { border: 2px solid #a0a0a0; border-radius: 6px; background: linear-gradient(#dcdcdc, #e6e6e6); overflow: hidden; }
.rgroup footer { position: relative; height: 20px; padding: 0 16px 2px 0; background: #222; color: #fff; text-align: center; font-size: 16px; line-height: 18px; }
.rgroup footer i { position: absolute; right: 4px; color: #aaa; font-style: normal; }
.cells { display: flex; gap: 15px; height: 168px; }
.col { width: 42px; display: flex; flex-direction: column; }
.col + .col:not(.next) { box-shadow: -8px 0 0 -7px #aaa; }
.col.next { margin-left: -15px; }
.col button { height: 42px; display: grid; place-items: center; }
.col svg { width: 36px; height: 34px; }
.input .col svg, .util .col svg { height: 36px; }
.col b { position: absolute; inset: 0; line-height: 40px; color: #fff; font-size: 24px; }
.col .serif { font-family: "Liberation Serif", serif; font-size: 28px; }
.col .small { font-size: 20px; }
.geometry { width: 202px; padding-left: 0; border-left: 0; }
.primitive { width: 48px; }
.primitive .col { margin-left: 1px; }
.primitive footer { padding-right: 0; font-size: 13px; }
.input { width: 162px; }
.util { width: 162px; }
.util .cells { height: 84px; }
.gh .toolbar { display: flex; align-items: center; flex: none; height: 45px; padding: 0 5px 0 0; background: linear-gradient(#fff, #eee); }
.gh .toolbar button { width: 43px; height: 43px; display: grid; place-items: center; }
.gh .toolbar .open { width: 32px; margin-right: 8px; }
.gh .toolbar .on { border: 2px solid #1a80d8; background: #eef7ff; }
.sep { width: 2px; height: 32px; margin: 0 7px; background: #c4c4c4; }
.sep.wide { margin: 0 12px; }
.sep.tight { margin: 0 1px; }
.zoom { position: relative; margin-right: 4px; }
.zoom select { display: block; width: 204px; height: 34px; padding: 0 5px; border: 2px solid #aaa; border-radius: 2px; background: #fff; appearance: none; font: inherit; color: inherit; }
.zoom svg { position: absolute; right: 9px; top: 13px; fill: none; stroke: #666; stroke-width: 2; }
.drop { width: 18px; font-size: 9px; text-align: center; }
.right { display: flex; align-items: center; margin-left: auto; }
.right .drop { width: 8px; margin-right: 3px; }

/* definition canvas */
.canvas { position: relative; flex: 1; min-height: 0; overflow: hidden; background: #d4d0c8; font-size: 22px; line-height: 30px; color: #222; }
.wires { position: absolute; width: 100%; height: 100%; }
.grid { fill: none; stroke: #bfbbb3; stroke-width: 2; }
.wire path { fill: none; stroke: #1e1e1a; stroke-opacity: .7; stroke-width: 6; }
.hot path { stroke: #ff501a; stroke-opacity: .82; }
.tag { position: absolute; height: 37px; border: 2px solid #444; background: linear-gradient(#fff, #dadada); text-align: center; line-height: 30px; }
.tag::after { content: ""; position: absolute; left: calc(50% - 7px); bottom: -9px; width: 14px; height: 14px; border: solid #555; border-width: 0 2px 2px 0; background: #dadada; transform: rotate(45deg); clip-path: polygon(100% 0, 100% 100%, 0 100%); }
.node { position: absolute; display: flex; align-items: center; border: 2px solid #555; border-radius: 7px; background: linear-gradient(#fff, #e2e2e2 12%, #c6c6c6); }
.grey { background: linear-gradient(#e4e4ec, #a4a3b0 12%, #8b8a98); }
.orange { border-color: #7a2f20; background: linear-gradient(#ffe4c0, #ff9f2c 35%, #ff8c14); }
.node svg { flex: none; margin: 0 4px 0 -4px; }
.ins, .outs { flex: 1; }
.ins li, .outs li { position: relative; height: 42px; line-height: 38px; }
.ins li { padding-left: 16px; }
.outs li { padding-right: 16px; text-align: right; }
.in, .ins li::before, .out, .outs li::after { content: ""; position: absolute; top: calc(50% - 10px); width: 10px; height: 20px; border: 3px solid #000; background: #fff; }
.in, .ins li::before { left: -11px; border-right: 0; border-radius: 10px 0 0 10px; }
.out, .outs li::after { right: -11px; border-left: 0; border-radius: 0 10px 10px 0; }
.param { justify-content: center; padding-bottom: 2px; }
.slider label { align-self: stretch; display: grid; place-items: center; padding-bottom: 2px; border-right: 2px solid #555; border-radius: 5px 0 0 5px; background: linear-gradient(#d0d0dc, #a09fae 30%, #8c8b9b); }
.track { position: relative; flex: 1; align-self: stretch; }
.track svg { position: absolute; left: 19px; top: 10px; width: 207px; margin: 0; }
.track path { stroke: #aaa; stroke-width: 1; fill: none; }
.track input { position: absolute; left: 10px; top: 10px; width: 226px; height: 18px; margin: 0; appearance: none; background: none; }
.n-sl2 input, .n-sl3 input { width: 228px; }
.track input::-webkit-slider-thumb { appearance: none; width: 13px; height: 13px; border: 3px solid #000; background: #fff; transform: rotate(45deg); }
.round input::-webkit-slider-thumb { width: 17px; height: 17px; border-width: 4px; border-radius: 50%; }
.track output { position: absolute; top: 3px; right: 99px; }
.n-sl2 output, .n-sl3 output { right: 37px; }
.panel { justify-content: center; background: #fff95b; box-shadow: inset 0 3px 0 #fffdc0; font: 22px/25px "Liberation Mono", monospace; text-align: center; color: #5a5720; }
.panel p { margin: 0 20px 6px 0; }
.panel b { color: #3a3812; }
.relay { position: absolute; width: 82px; height: 36px; border: 2px solid #444; border-radius: 18px; background: linear-gradient(90deg, #222 14px, #9e9dab 14px 64px, #222 64px); }
.negx { width: 36px; height: 38px; margin: 0 4px 0 -4px; border: 2px solid #555; border-radius: 6px; background: #f2f2f2; font-style: italic; line-height: 30px; text-align: center; box-shadow: 1px 2px 3px #888; }
.t-curve { left: 274px; top: 39px; width: 78px; }
.n-curve { left: 176px; top: 107px; width: 274px; height: 43px; }
.t-offset { left: 953px; top: 26px; width: 144px; }
.n-offset { left: 957px; top: 95px; width: 139px; height: 176px; }
.n-sl1 { left: 174px; top: 228px; width: 466px; height: 42px; }
.n-sl1 label { width: 213px; }
.t-neg { left: 704px; top: 143px; width: 109px; }
.n-neg { left: 695px; top: 211px; width: 129px; height: 59px; }
.n-neg .ins li { padding-left: 12px; }
.n-neg .outs li { padding-right: 20px; }
.t-relay1 { left: 685px; top: 317px; width: 74px; }
.n-relay1 { left: 681px; top: 385px; }
.n-sl2 { left: 685px; top: 451px; width: 338px; height: 42px; }
.n-sl2 label, .n-sl3 label { width: 83px; }
.n-panel1 { left: 687px; top: 516px; width: 335px; height: 209px; }
.t-pop { left: 1406px; top: 268px; width: 143px; }
.n-pop { left: 1409px; top: 336px; width: 138px; height: 177px; }
.n-pop .outs li { padding-right: 20px; }
.t-relay2 { left: 1239px; top: 612px; width: 74px; }
.n-relay2 { left: 1236px; top: 680px; }
.n-panel2 { left: 1226px; top: 741px; width: 335px; height: 209px; }
.n-sl3 { left: 1234px; top: 987px; width: 338px; height: 42px; }
.t-stream { left: 110px; top: 741px; width: 147px; }
.n-stream { left: 103px; top: 809px; width: 160px; height: 177px; }
.n-stream .ins { flex: none; width: 48px; }
.n-stream .outs li { padding-right: 20px; }
.t-boundary { left: 320px; top: 950px; width: 207px; }
.n-boundary { left: 357px; top: 1018px; width: 133px; height: 61px; }
.n-boundary .outs li { padding-right: 22px; }
.t-list { left: 328px; top: 1393px; width: 106px; }
.n-list { left: 303px; top: 1461px; width: 155px; height: 217px; align-items: flex-start; padding-top: 4px; }
.n-list .ins { flex: none; width: 46px; }
.n-list .ins li { height: 69px; line-height: 65px; padding-left: 22px; }
.n-list .outs li { padding-right: 24px; }
.n-list svg { margin: 0; }
.listicon { display: flex; align-items: center; height: 136px; padding-top: 68px; margin: 0 -12px 0 -2px; }
.balloon { position: absolute; left: 101px; top: -25px; width: 28px; height: 22px; border: 2px solid #a87a10; border-radius: 4px; background: linear-gradient(#fff0a8, #eba40e); }

/* Rhinoceros */
.rh { background: #eaebef; }
.rh .titlebar { padding-left: 12px; gap: 6px; color: #888; }
.rh .controls { margin-right: -28px; }
.rh .controls svg { stroke: #888; }
.rh .menu { height: 26px; padding-left: 13px; gap: 20px; background: #fff; color: #777; }
.command { flex: none; margin: 6px 0 6px 10px; background: #fff; color: #222; }
.command pre { margin: 0; padding-left: 2px; font: inherit; line-height: 22px; }
.prompt { display: flex; align-items: center; height: 28px; border-top: 2px solid #cbd0e2; padding: 0 0 3px 2px; font-weight: bold; }
.prompt input { flex: 1; height: 22px; border: 0; outline: 0; background: none; font: inherit; }
.rh .tabs { display: flex; flex: none; align-items: stretch; height: 33px; padding: 7px 0 0 11px; border-top: 2px solid #d8dbe6; border-bottom: 2px solid #c5cce0; gap: 30px; color: #444; }
.rh .tabs .active { padding: 0 12px; margin-right: -12px; border: 2px solid #c5cce0; border-width: 2px 2px 0 2px; border-radius: 10px 5px 0 0; background: #eef0f4; }
.rh .toolbar { display: flex; flex: none; height: 102px; padding: 1px 0 0 10px; }
.rh .toolbar button { width: 42px; height: 42px; }
.rh .toolbar svg, .palette svg { display: block; width: 42px; height: 42px; }
.help b { position: absolute; inset: 0; color: #fff; font: bold 28px/42px "Liberation Serif", serif; text-align: center; }
.work { flex: 1; display: flex; min-height: 0; }
.palette { flex: none; width: 139px; display: grid; grid-template-columns: repeat(3, 42px); grid-auto-rows: 42px; align-content: start; padding-top: 4px; margin-top: 5px; padding-left: 1px; border-top: 3px double #c5cce0; }
.ln { fill: none; stroke: #333; stroke-width: 2; }
.ln .pt { fill: #fff; }
.palette use, .toolbar use { stroke: none; }
.text b { display: block; color: #4767d8; font: bold 38px/42px "Liberation Serif", serif; -webkit-text-stroke: 1px #222; }
.viewport { position: relative; flex: 1; min-width: 0; overflow: hidden; border-left: 1px solid #c5cce0; background: #9da3aa; }
.model { position: absolute; width: 100%; height: 100%; }
.model text { font-size: 20px; fill: #5d636b; }
.vtitle { position: absolute; left: 0; top: 0; display: flex; align-items: center; width: 71px; height: 27px; padding-left: 10px; gap: 9px; border-radius: 0 0 5px 0; background: #8199e8; color: #333; font-weight: 600; }
.vtitle i { height: 22px; border-left: 2px solid #333; position: relative; }
.vtitle i::after { content: ""; position: absolute; left: 2px; top: 8px; border: 5px solid transparent; border-top-color: #222; }
```
